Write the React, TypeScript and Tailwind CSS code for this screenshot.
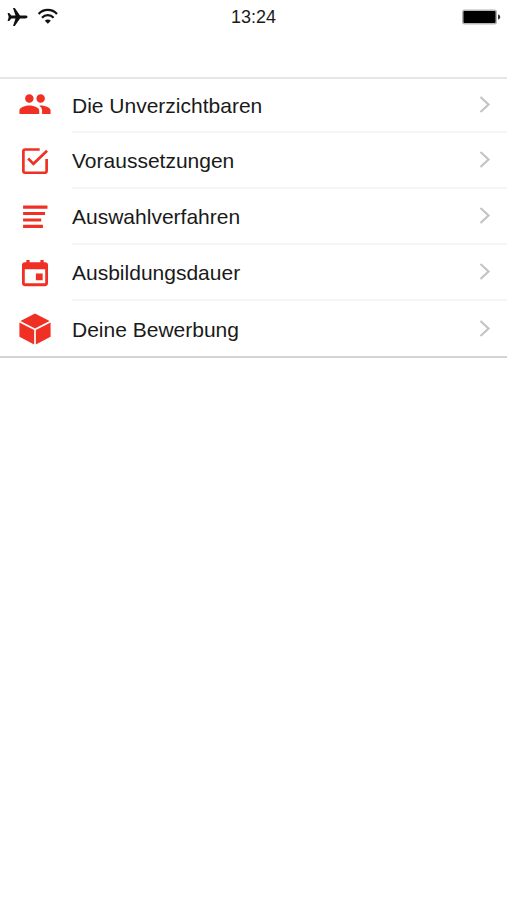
import type { ReactNode } from "react";

interface MenuItem {
  label: string;
  href: string;
  icon: ReactNode;
}

const menuItems: MenuItem[] = [
  {
    label: "Die Unverzichtbaren",
    href: "#unverzichtbaren",
    icon: (
      <path
        fill="currentColor"
        d="M16 9.700c1.660 0 2.990-1.340 2.990-3S17.660 3.700 16 3.700s-3 1.340-3 3 1.340 3 3 3zm-8 0c1.660 0 2.990-1.340 2.990-3S9.660 3.700 8 3.700 5 5.040 5 6.700s1.340 3 3 3zm0 2c-2.330 0-7 1.170-7 3.500v2.500h14v-2.500c0-2.330-4.670-3.500-7-3.500zm8 0c-.29 0-.62.02-.97.05 1.160.84 1.970 1.970 1.970 3.450v2.500h6v-2.500c0-2.330-4.670-3.500-7-3.500z"
      />
    ),
  },
  {
    label: "Voraussetzungen",
    href: "#voraussetzungen",
    icon: (
      <g fill="none" stroke="currentColor" strokeWidth="1.9">
        <path d="M15.3 3.9H5a1.2 1.2 0 0 0-1.2 1.2v14A1.2 1.2 0 0 0 5 20.3h14a1.2 1.2 0 0 0 1.2-1.2v-8.6" />
        <path d="M7.2 10.2l3.7 3.8 9.6-9.2" />
      </g>
    ),
  },
  {
    label: "Auswahlverfahren",
    href: "#auswahlverfahren",
    icon: (
      <path
        fill="currentColor"
        d="M3.6 3.9h17.2v2.2H3.6zM3.6 8.4h15.5v2.2H3.6zM3.6 13h12.8v2.2H3.6zM3.6 17.5h14v2.2h-14z"
      />
    ),
  },
  {
    label: "Ausbildungsdauer",
    href: "#ausbildungsdauer",
    icon: (
      <path
        fill="currentColor"
        fillRule="evenodd"
        d="M5.900 2.800h2.300v1.600h7.600V2.800h2.300v1.600H19a2.200 2.200 0 0 1 2.200 2.200v12.500a2.200 2.200 0 0 1-2.200 2.200H5a2.200 2.200 0 0 1-2.200-2.200V6.600A2.200 2.200 0 0 1 5 4.400h.9zM4.800 9.300v9.900h14.400V9.300zM12.600 12.400h4.800v4.800h-4.800z"
      />
    ),
  },
  {
    label: "Deine Bewerbung",
    href: "#bewerbung",
    icon: (
      <path
        fill="currentColor"
        d="M12 1l10.3 5.3L12 11.6 1.7 6.3zM1 7.4l10.4 5.3V23L1 17.4zM23 7.4v10L12.6 23V12.7z"
      />
    ),
  },
];

function StatusBar() {
  return (
    <div className="grid h-[34px] grid-cols-3 items-center px-1.5">
      <div className="flex items-center gap-2">
        <svg viewBox="0 0 22 20" className="h-5 w-[22px]" aria-hidden="true">
          <path
            fill="#111"
            d="M21.5 10c0 .9-1 1.4-2.3 1.4H14L8.8 19H7l2.5-7.6H5.300L3.200 14H1.600l1.100-4-1.100-4h1.600l2.100 2.600h4.200L7 1h1.800L14 8.600h5.200c1.300 0 2.300.5 2.300 1.400z"
          />
        </svg>
        <svg viewBox="0 0 24 18" className="h-[18px] w-6" aria-hidden="true">
          <g fill="none" stroke="#111" strokeWidth="2.2">
            <path d="M2.600 6a12.500 12.500 0 0 1 18.400 0" />
            <path d="M6 9.700a8 8 0 0 1 11.600 0" />
          </g>
          <path fill="#111" d="M11.800 15.800l-3-3.100a4.200 4.200 0 0 1 6 0z" />
        </svg>
      </div>
      <time className="text-center text-lg leading-6">13:24</time>
      <svg
        viewBox="0 0 40 18"
        className="h-[18px] w-10 justify-self-end"
        aria-hidden="true"
      >
        <rect x="1" y="1.5" width="35" height="15" rx="2.5" fill="#b5b5b5" />
        <rect x="2.5" y="3" width="32" height="12" rx="1" fill="#000" />
        <path fill="#333" d="M37 6.500c3 .4 3 4.600 0 5z" />
      </svg>
    </div>
  );
}

function MenuRow({ label, href, icon }: MenuItem) {
  return (
    <li className="group">
      <a
        href={href}
        className="flex h-14 items-center pl-[18px] group-first:h-[54px] group-last:h-[55px]"
      >
        <svg
          viewBox="0 0 24 24"
          className="mr-5 size-[34px] shrink-0 text-[#f03024]"
          aria-hidden="true"
        >
          {icon}
        </svg>
        <span className="flex flex-1 items-center justify-between self-stretch border-b-2 border-[#f5f5f5] pr-4 group-last:border-b-0">
          <span className="pt-0.5 text-[21px] leading-7">{label}</span>
          <svg viewBox="0 0 12 18" className="h-[18px] w-3" aria-hidden="true">
            <path
              d="M1.500 1L9.500 8.500l-8 7.500"
              fill="none"
              stroke="#c4c4c6"
              strokeWidth="2.2"
            />
          </svg>
        </span>
      </a>
    </li>
  );
}

function App() {
  return (
    <div className="min-h-screen bg-white font-['Liberation_Sans',Arial,sans-serif] text-[#1a1a1a]">
      <header className="h-[77px]">
        <StatusBar />
      </header>
      <nav aria-label="Ausbildung">
        <ul className="border-t-2 border-b-2 border-t-[#e6e6e6] border-b-[#d4d4d4]">
          {menuItems.map((item) => (
            <MenuRow key={item.href} {...item} />
          ))}
        </ul>
      </nav>
    </div>
  );
}

export default App;
